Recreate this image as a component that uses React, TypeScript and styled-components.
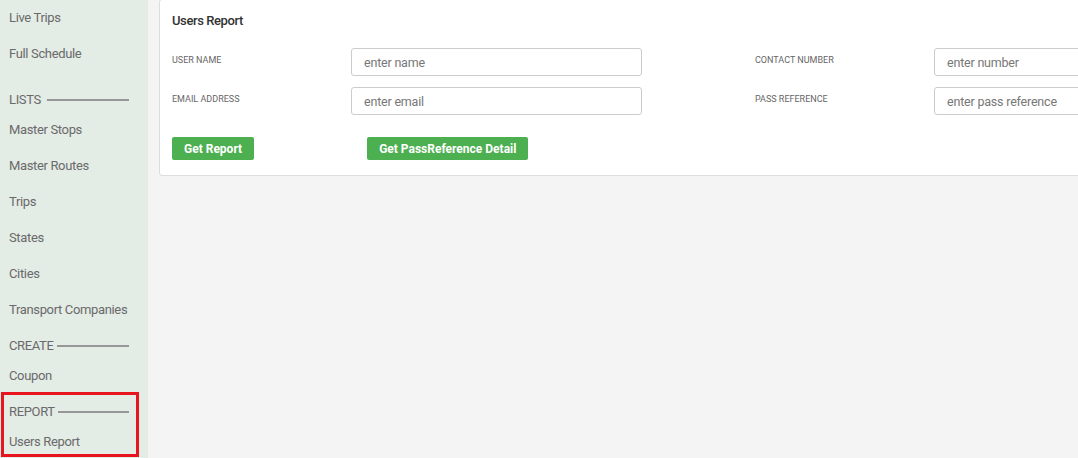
import React from "react";
import styled, { createGlobalStyle } from "styled-components";

const Global = createGlobalStyle`
  html, body { margin: 0; padding: 0; height: 100%; }
  body {
    font-family: Roboto, "Liberation Sans", Arial, sans-serif;
    background: #f4f4f4;
    overflow: hidden;
  }
  #root { height: 100%; }
  * { box-sizing: border-box; }
`;

const Layout = styled.div`
  display: flex;
  height: 458px;
  width: 100%;
  overflow: hidden;
`;

const Sidebar = styled.nav`
  flex: 0 0 148px;
  width: 148px;
  min-width: 0;
  background: #e4ece6;
  padding: 0 19px 0 9px;
  display: flex;
  flex-direction: column;
`;

const NavItem = styled.div`
  height: 36px;
  line-height: 36px;
  font-size: 13px;
  letter-spacing: -0.35px;
  color: #6a6a6a;
  white-space: nowrap;
`;

const Section = styled.div<{ $highlight?: boolean }>`
  position: relative;
  display: flex;
  flex-direction: column;
  ${(p) =>
    p.$highlight &&
    `
    &::after {
      content: "";
      position: absolute;
      top: -2px;
      left: -8px;
      right: -10px;
      bottom: 3px;
      border: 3px solid #e8151f;
      pointer-events: none;
    }
  `}
`;

const SectionHeader = styled.div<{ $gap?: number }>`
  display: flex;
  align-items: flex-start;
  height: 30px;
  padding-top: 11px;
  margin-top: ${(p) => p.$gap ?? 0}px;
  font-size: 13px;
  letter-spacing: -0.35px;
  color: #6a6a6a;
`;

const HeaderText = styled.span`
  line-height: 14px;
`;

const HeaderLine = styled.span<{ $offset?: number }>`
  flex: 1;
  height: 2px;
  margin-top: 6px;
  margin-left: ${(p) => p.$offset ?? 3}px;
  background: #979797;
`;

const Main = styled.main`
  flex: 1;
  padding-left: 11px;
  min-width: 0;
`;

const Card = styled.section`
  width: 1080px;
  margin-top: -1px;
  background: #fff;
  border: 1px solid #dddddd;
  border-radius: 3px;
  padding: 13px 12px 15px;
`;

const Title = styled.h3`
  margin: 0 0 20px;
  font-size: 13px;
  letter-spacing: -0.4px;
  line-height: 15px;
  font-weight: 500;
  color: #333;
`;

const FormGrid = styled.div`
  display: grid;
  grid-template-columns: 179px 404px 179px 1fr;
  row-gap: 11px;
`;

const Label = styled.label`
  font-size: 9px;
  line-height: 12px;
  padding-top: 6px;
  color: #666;
  text-transform: uppercase;
  white-space: nowrap;
`;

const Input = styled.input`
  width: 291px;
  height: 28px;
  border: 1px solid #cccccc;
  border-radius: 3px;
  padding: 0 12px;
  font-family: Roboto, "Liberation Sans", Arial, sans-serif;
  font-size: 12.5px;
  letter-spacing: -0.2px;
  color: #555;
  background: #fff;
  outline: none;
  &::placeholder {
    color: #777;
  }
`;

const Actions = styled.div`
  display: flex;
  gap: 113px;
  margin-top: 22px;
`;

const Button = styled.button`
  height: 23px;
  padding: 0 12px;
  border: none;
  border-radius: 2px;
  background: #4caf50;
  color: #fff;
  font-family: Roboto, "Liberation Sans", Arial, sans-serif;
  font-size: 12px;
  font-weight: 700;
  cursor: pointer;
`;

const fields: [string, string, string, string][] = [
  ["User Name", "enter name", "Contact Number", "enter number"],
  ["Email Address", "enter email", "Pass Reference", "enter pass reference"],
];

export default function App() {
  return (
    <>
      <Global />
      <Layout>
        <Sidebar>
          <NavItem>Live Trips</NavItem>
          <NavItem>Full Schedule</NavItem>
          <Section>
            <SectionHeader $gap={10}>
              <HeaderText>LISTS</HeaderText>
              <HeaderLine $offset={6} />
            </SectionHeader>
            <NavItem>Master Stops</NavItem>
            <NavItem>Master Routes</NavItem>
            <NavItem>Trips</NavItem>
            <NavItem>States</NavItem>
            <NavItem>Cities</NavItem>
            <NavItem>Transport Companies</NavItem>
          </Section>
          <Section>
            <SectionHeader>
              <HeaderText>CREATE</HeaderText>
              <HeaderLine />
            </SectionHeader>
            <NavItem>Coupon</NavItem>
          </Section>
          <Section $highlight>
            <SectionHeader>
              <HeaderText>REPORT</HeaderText>
              <HeaderLine />
            </SectionHeader>
            <NavItem>Users Report</NavItem>
          </Section>
        </Sidebar>
        <Main>
          <Card>
            <Title>Users Report</Title>
            <FormGrid>
              {fields.map(([l1, p1, l2, p2]) => (
                <React.Fragment key={l1}>
                  <Label>{l1}</Label>
                  <div>
                    <Input placeholder={p1} />
                  </div>
                  <Label>{l2}</Label>
                  <div>
                    <Input placeholder={p2} />
                  </div>
                </React.Fragment>
              ))}
            </FormGrid>
            <Actions>
              <Button>Get Report</Button>
              <Button>Get PassReference Detail</Button>
            </Actions>
          </Card>
        </Main>
      </Layout>
    </>
  );
}
